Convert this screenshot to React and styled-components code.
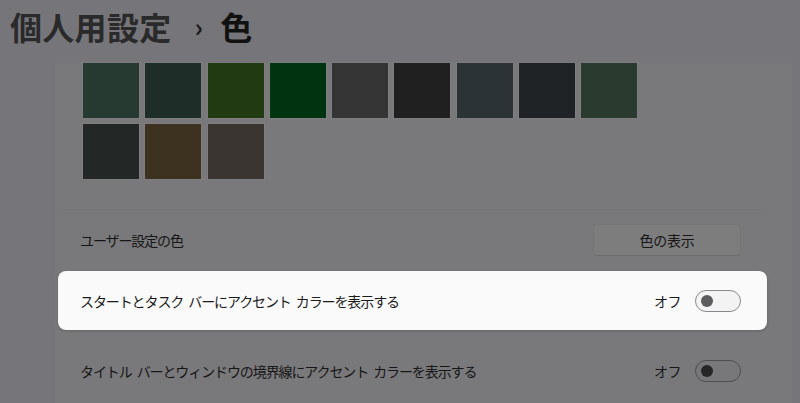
import React from 'react'
import styled, { createGlobalStyle } from 'styled-components'

const GlobalStyle = createGlobalStyle`
    html, body {
        margin: 0;
        padding: 0;
        background: #76767a;
    }
    body {
        font-family: "Noto Sans CJK JP", "Noto Sans", sans-serif;
        width: 800px;
        height: 403px;
        overflow: hidden;
    }
`;

const swatchRows = [
    ['#263a32', '#1f2d29', '#223a12', '#00330f', '#353535', '#202020', '#2b3336', '#1f2326', '#2b3a2e'],
    ['#232826', '#3d3220', '#3a3530'],
]

function Toggle({ lit }) {
    return (
        <Track lit={lit}>
            <Knob lit={lit} />
        </Track>
    )
}

function App() {
    return (
        <Page>
            <GlobalStyle />
            <Title>
                <Crumb>個人用設定</Crumb>
                <Chevron>›</Chevron>
                <Current>色</Current>
            </Title>
            <Panel>
                <Swatches>
                    {swatchRows.map((row, i) => (
                        <SwatchRow key={i}>
                            {row.map(c => (
                                <Swatch key={c} color={c} />
                            ))}
                        </SwatchRow>
                    ))}
                </Swatches>
                <Row height={60}>
                    <Label>ユーザー設定の色</Label>
                    <Button>色の表示</Button>
                </Row>
                <Card>
                    <Label lit>スタートとタスク バーにアクセント カラーを表示する</Label>
                    <Control>
                        <State lit>オフ</State>
                        <Toggle lit />
                    </Control>
                </Card>
                <Row height={62} top={10}>
                    <Label>タイトル バーとウィンドウの境界線にアクセント カラーを表示する</Label>
                    <Control>
                        <State>オフ</State>
                        <Toggle />
                    </Control>
                </Row>
            </Panel>
        </Page>
    )
}

export default App

const Page = styled.div`
    width: 800px;
    height: 403px;
    background: #76767a;
    overflow: hidden;
`;

const Title = styled.h1`
    margin: 0;
    height: 63px;
    display: flex;
    align-items: center;
    padding-left: 10px;
    padding-bottom: 12px;
    box-sizing: border-box;
    font-size: 32px;
    font-weight: 600;
    letter-spacing: 0.3px;
`;

const Crumb = styled.span`
    color: #2a2a2b;
`;

const Chevron = styled.span`
    color: #1e1e1f;
    font-size: 26px;
    font-weight: 600;
    margin: 0 17px 0 23px;
`;

const Current = styled.span`
    color: #111111;
`;

const Panel = styled.div`
    margin-left: 55px;
    width: 737px;
    height: 340px;
    background: #79797b;
    padding-left: 3px;
    box-sizing: border-box;
    display: flex;
    flex-direction: column;
`;

const Swatches = styled.div`
    width: 709px;
    display: flex;
    flex-direction: column;
    gap: 6px;
    padding: 0 0 30px 25px;
    box-sizing: border-box;
    border-bottom: 1px solid #767678;
`;

const SwatchRow = styled.div`
    display: flex;
    gap: 6.3px;
`;

const Swatch = styled.div`
    width: 56px;
    height: 55px;
    background: ${p => p.color};
    box-shadow: 0 0 0 1px rgba(255, 255, 255, 0.04);
`;

const Row = styled.div`
    width: 709px;
    height: ${p => p.height}px;
    margin-top: ${p => p.top || 0}px;
    display: flex;
    align-items: center;
    justify-content: space-between;
    padding: 0 26px 0 22px;
    box-sizing: border-box;
`;

const Card = styled(Row)`
    height: 59px;
    margin-top: 1px;
    background: #fafafb;
    border-radius: 8px;
    box-shadow: 0 1px 3px rgba(0, 0, 0, 0.18);
`;

const Label = styled.span`
    font-size: 14px;
    letter-spacing: -1.1px;
    word-spacing: 3px;
    color: ${p => (p.lit ? '#1b1b1b' : '#161616')};
`;

const Button = styled.div`
    width: 148px;
    height: 32px;
    display: flex;
    align-items: center;
    justify-content: center;
    font-size: 14px;
    letter-spacing: -0.3px;
    color: #161616;
    background: #7d7d7e;
    border: 1px solid #767677;
    border-bottom-color: #6b6b6c;
    border-radius: 4px;
    box-sizing: border-box;
`;

const Control = styled.div`
    display: flex;
    align-items: center;
    gap: 14px;
`;

const State = styled.span`
    font-size: 14px;
    letter-spacing: -0.5px;
    color: ${p => (p.lit ? '#1b1b1b' : '#161616')};
`;

const Track = styled.div`
    width: 46px;
    height: 22px;
    border-radius: 11px;
    border: 1px solid ${p => (p.lit ? '#8a8a8c' : '#4f4f50')};
    background: ${p => (p.lit ? '#f3f3f4' : '#78787a')};
    box-sizing: border-box;
    display: flex;
    align-items: center;
    padding-left: 5px;
`;

const Knob = styled.div`
    width: 12px;
    height: 12px;
    border-radius: 50%;
    background: ${p => (p.lit ? '#5c5c5e' : '#262627')};
`;
